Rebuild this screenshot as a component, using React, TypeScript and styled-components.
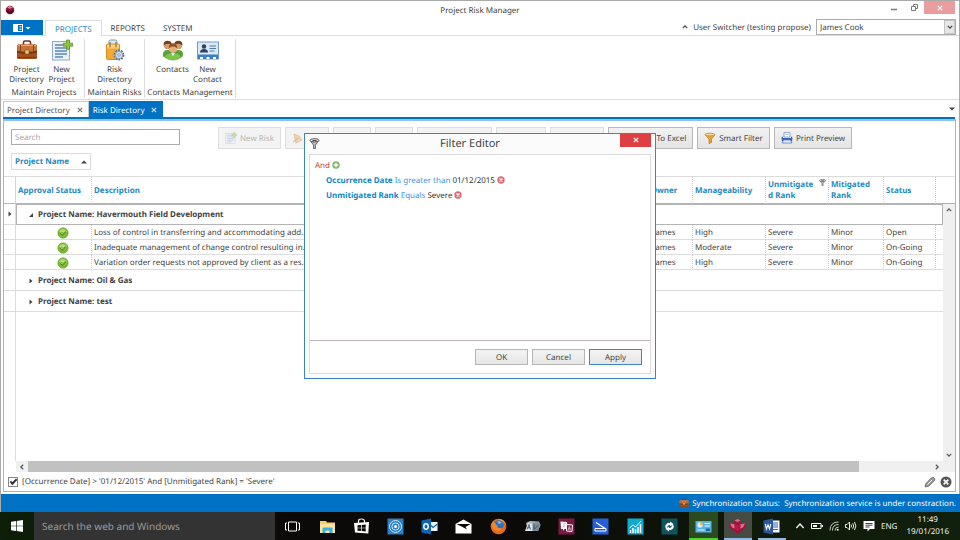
import React from "react";
import styled, { createGlobalStyle, css } from "styled-components";

const blue = "#0072c6";
const headText = "#1f8ac6";
const line = "#dcdcdc";

const GlobalStyle = createGlobalStyle`
  *, *::before, *::after { box-sizing: border-box; }
  body {
    margin: 0;
    background: #fff;
    color: #444;
    font: 8px/11px "Noto Sans", "Open Sans", sans-serif;
    text-rendering: geometricPrecision;
  }
  button, input, select { font: inherit; color: inherit; margin: 0; text-rendering: inherit; }
  button { padding: 0; border: 0; background: none; white-space: nowrap; }
  svg { display: block; flex: none; }
`;

/* ---------- icons ---------- */

type IconProps = { size?: number };

const RoundLogo = () => (
  <svg width="10" height="10" viewBox="0 0 10 10" aria-hidden="true">
    <circle cx="5" cy="5" r="4.300" fill="#8e1338" />
    <path d="M2 2.500 5 1l3 1.500-3 1.200z" fill="#dc8aa2" />
    <path d="M1 5l4 1 4-1-1.500 3L5 9 2.500 8z" fill="#5e0a24" />
  </svg>
);

const BriefcaseIcon = ({ size = 22 }: IconProps) => (
  <svg width={size} height={size} viewBox="0 0 22 22" aria-hidden="true">
    <path d="M7.500 6V3.500q0-1.500 1.500-1.500h4q1.500 0 1.500 1.500V6" fill="none" stroke="#6b3515" strokeWidth="1.600" />
    <rect x="1" y="5.500" width="20" height="14.500" rx="1.500" fill="#a5511f" />
    <rect x="1" y="5.500" width="20" height="7" rx="1.500" fill="#c8733a" />
    <path d="M1 11.500q10 3.500 20 0v2q-10 3-20 0z" fill="#7a3712" />
    <path d="M2 6.500h18" stroke="#e6a878" />
    <path d="M4.500 6v6.500M17.500 6v6.500" stroke="#8a4419" />
    <rect x="9" y="11" width="4" height="4" rx=".8" fill="#e9c878" stroke="#7c4a12" strokeWidth=".6" />
    <path d="M1.500 18.500h19" stroke="#7a3712" />
  </svg>
);

const NewDocIcon = ({ size = 22 }: IconProps) => (
  <svg width={size} height={size} viewBox="0 0 22 22" aria-hidden="true">
    <rect x="1.500" y="2.500" width="17" height="18.500" fill="#e9f1fa" stroke="#8fabcb" />
    <path d="M4 6h8M4 9h12M4 12h12M4 15h12M4 18h8" stroke="#5a86bb" strokeWidth="1.300" />
    <path d="M15.500 1h3v3.200h3.200v3h-3.200v3.200h-3V7.200h-3.200v-3h3.200z" fill="#8cc63c" stroke="#4d8a1a" strokeWidth=".7" />
  </svg>
);

const RiskFolderIcon = () => (
  <svg width="20" height="22" viewBox="0 0 20 22" aria-hidden="true">
    <path d="M4 5V2.500q0-1.500 1.500-1.500h5Q12 1 12 2.500V5" fill="#dfe6ee" stroke="#8296ad" />
    <rect x="1.500" y="5" width="13" height="15.500" rx="1" fill="#f3a92f" stroke="#c47d13" strokeWidth=".8" />
    <path d="M2 5.500h12v4H2z" fill="#fbd07a" />
    <path d="M5 3v5.500M11 3v5.500" stroke="#7a6a4a" />
    <circle cx="14" cy="16" r="4.500" fill="#dfe8f3" stroke="#5d7596" strokeWidth="1.800" strokeDasharray="1.900 .92" />
    <circle cx="14" cy="16" r="3.500" fill="#dfe8f3" stroke="#6f87a8" strokeWidth=".7" />
    <circle cx="14" cy="16" r="1.300" fill="#fff" stroke="#5d7596" strokeWidth=".7" />
  </svg>
);

const ContactsIcon = () => (
  <svg width="22" height="22" viewBox="0 0 24 24" aria-hidden="true">
    <path d="M1 17q0-5 5-5t5 5-10 2zM13 17q0-5 5-5t5 5-10 2z" fill="#5ea13b" />
    <path d="M3 20q0-5 9-5t9 5q-9 6-18 0z" fill="#7cc64a" stroke="#42832a" strokeWidth=".6" />
    <circle cx="6" cy="7" r="4" fill="#d79c6c" />
    <circle cx="18" cy="7" r="4" fill="#d79c6c" />
    <path d="M1.800 7q-.5-5 4.200-5t4.500 4Q5 4 1.800 7zM22.200 7q.5-5-4.200-5t-4.500 4Q19 4 22.200 7z" fill="#70401f" />
    <circle cx="12" cy="10.500" r="4.300" fill="#e6ae80" />
    <path d="M7.500 10q-.3-5.500 4.500-5.500t4.500 5.500Q12 6.500 7.500 10z" fill="#8a5429" />
    <path d="m10 15.500 2 3 2-3z" fill="#fff" />
  </svg>
);

const CardIcon = () => (
  <svg width="22" height="22" viewBox="0 0 22 22" aria-hidden="true">
    <rect x=".5" y="3" width="21" height="17" fill="#dbe9f7" stroke="#6e9ccb" />
    <path d="M1 15.500h20V20H1z" fill="#3e7fc1" />
    <path d="M3 20v-2h3v2M9.500 20v-2h3v2M16 20v-2h3v2" fill="#fff" />
    <circle cx="7" cy="7.500" r="2.200" fill="#2d4360" />
    <path d="M3 13.500q0-3.500 4-3.500t4 3.500z" fill="#2d4360" />
    <path d="M12.500 7h6.500M12.500 9.500h6.500M12.500 12h5" stroke="#537aa8" strokeWidth="1.200" />
  </svg>
);

const MenuGlyph = () => (
  <svg width="18" height="8" viewBox="0 0 18 8" aria-hidden="true">
    <rect x=".5" y=".5" width="9" height="7" fill="none" stroke="#fff" />
    <path d="M1 1h4v6H1z" fill="#fff" />
    <path d="M6.500 2.500h2M6.500 4h2M6.500 5.500h2" stroke="#fff" strokeWidth=".7" />
    <path d="M12.500 3h5L15 5.500z" fill="#fff" />
  </svg>
);

const Cross = ({ size = 6 }: IconProps) => (
  <svg width={size} height={size} viewBox="0 0 6 6" aria-hidden="true">
    <path d="m.8.8 4.400 4.400M5.200.8.8 5.200" stroke="currentColor" strokeWidth="1.200" />
  </svg>
);

const turns = { up: 0, right: 90, down: 180, left: 270 };
const Chevron = ({ to, size = 6 }: IconProps & { to: keyof typeof turns }) => (
  <svg width={size} height={size} viewBox="0 0 6 6" aria-hidden="true">
    <path d="m.8 4.200 2.200-2.400 2.200 2.400" fill="none" stroke="currentColor" strokeWidth={size > 6 ? 0.8 : 1.2} transform={`rotate(${turns[to]} 3 3)`} />
  </svg>
);

const UpTriangle = () => (
  <svg width="6" height="4" viewBox="0 0 6 4" aria-hidden="true"><path d="M0 3.500 3 .5l3 3z" fill="#444" /></svg>
);
const DownTriangle = () => (
  <svg width="6" height="4" viewBox="0 0 6 4" aria-hidden="true"><path d="M0 .5h6l-3 3z" fill="#444" /></svg>
);
const RightTriangle = () => (
  <svg width="4" height="6" viewBox="0 0 4 6" aria-hidden="true"><path d="M.5.500v5L3.500 3z" fill="#444" /></svg>
);
const OpenTriangle = () => (
  <svg width="4" height="6" viewBox="0 0 4 6" aria-hidden="true"><path d="M4 1v4H0z" fill="#444" /></svg>
);

const ApprovedIcon = () => (
  <svg width="12" height="12" viewBox="0 0 12 12" aria-hidden="true">
    <circle cx="6" cy="6" r="5.200" fill="#7dba35" stroke="#6aa52b" strokeWidth=".6" />
    <path d="M1.800 4.500q4-5 8.400 0Q6 6 1.800 4.500z" fill="#b5dc7a" />
    <path d="m3.500 6.200 1.800 1.800 3.200-3.700" fill="none" stroke="#55881f" strokeWidth="1.300" />
    <path d="m3.700 5.500 1.600 1.700 2.700-3.200" fill="none" stroke="#dff0c0" strokeWidth=".6" />
  </svg>
);

const FunnelIcon = () => (
  <svg width="12" height="12" viewBox="0 0 12 12" aria-hidden="true">
    <path d="M1 2.500q5-2.500 10 0L7.500 7v3.500L5 11.500V7z" fill="#f0a233" stroke="#b8700f" strokeWidth=".7" />
    <ellipse cx="6" cy="2.500" rx="4.500" ry="1.300" fill="#fbdc9c" stroke="#b8700f" strokeWidth=".5" />
  </svg>
);

const GreyFunnelIcon = ({ size = 11 }: IconProps) => (
  <svg width={size} height={size} viewBox="0 0 11 11" aria-hidden="true">
    <path d="M1 2.500 4.500 7v3.500h2V7L10 2.500z" fill="#bbb" stroke="#555" strokeWidth=".8" />
    <ellipse cx="5.500" cy="2.300" rx="4.500" ry="1.600" fill="#eee" stroke="#444" strokeWidth=".9" />
    <path d="M3.500 2.500h4" stroke="#444" />
  </svg>
);

const PrinterIcon = () => (
  <svg width="12" height="12" viewBox="0 0 12 12" aria-hidden="true">
    <path d="M3 .5h6V5H3z" fill="#fff" stroke="#6c86b8" strokeWidth=".7" />
    <path d="M.5 6q0-1.500 1.500-1.500V6h8V4.500q1.500 0 1.500 1.500L11 9.500H1z" fill="#3f66b0" />
    <path d="M2.500 8h7l1.500 3H1z" fill="#e3ecf8" stroke="#4f72b3" strokeWidth=".7" />
    <path d="M4 2.500h4" stroke="#9ab" strokeWidth=".7" />
  </svg>
);

const EditIcon = () => (
  <svg width="12" height="12" viewBox="0 0 12 12" aria-hidden="true">
    <path d="m2 2 5 2 3 4-6 3z" fill="#f3a23c" stroke="#b66c10" strokeWidth=".7" />
    <path d="m1 10 5-4" stroke="#8b5a1a" />
  </svg>
);

const ExcelIcon = () => (
  <svg width="12" height="12" viewBox="0 0 12 12" aria-hidden="true">
    <rect x="1" y="1" width="10" height="10" fill="#2b8a4b" />
    <path d="m4 3.500 4 5m0-5-4 5" stroke="#fff" strokeWidth="1.200" />
  </svg>
);

const AddIcon = () => (
  <svg width="8" height="8" viewBox="0 0 8 8" aria-hidden="true">
    <circle cx="4" cy="4" r="3.700" fill="#7db76b" />
    <path d="M4 1.800v4.400M1.800 4h4.400" stroke="#fff" strokeWidth="1.300" />
  </svg>
);
const RemoveIcon = () => (
  <svg width="8" height="8" viewBox="0 0 8 8" aria-hidden="true">
    <circle cx="4" cy="4" r="3.700" fill="#de6c74" />
    <path d="m2.500 2.500 3 3m0-3-3 3" stroke="#fff" strokeWidth="1.300" />
  </svg>
);

const PencilIcon = () => (
  <svg width="12" height="12" viewBox="0 0 12 12" aria-hidden="true">
    <path d="m1 11 .8-3.500 6-6q1-.8 2.300.5t.5 2.300l-6 6z" fill="#999" stroke="#666" strokeWidth=".8" />
    <path d="m3.500 8.500 4.500-4.500" stroke="#fff" strokeWidth=".9" />
  </svg>
);
const ClearIcon = () => (
  <svg width="12" height="12" viewBox="0 0 12 12" aria-hidden="true">
    <circle cx="6" cy="6" r="5.500" fill="#555" />
    <path d="m3.700 3.700 4.600 4.600m0-4.600L3.700 8.300" stroke="#fff" strokeWidth="1.700" />
  </svg>
);

const RestoreIcon = () => (
  <svg width="7" height="7" viewBox="0 0 7 7" aria-hidden="true">
    <path d="M2.500 2V.5h4v4H5" fill="none" stroke="#777" />
    <path d="M.5 2.500h4v4h-4z" fill="#fff" stroke="#777" />
  </svg>
);

/* ---------- window frame ---------- */

const Page = styled.div`
  display: flex;
  flex-direction: column;
  min-height: 100vh;
`;

const AppWindow = styled.main`
  position: relative;
  flex: 1;
  display: flex;
  flex-direction: column;
  border: 1px solid #a9a9a9;
  border-bottom: 0;
`;

const TitleBar = styled.header`
  display: grid;
  grid-template-columns: 1fr auto 1fr;
  height: 18px;
  padding: 0 4px;
  align-items: center;
`;

const AppTitle = styled.h1`
  margin: 0;
  font-size: 8px;
  font-weight: 400;
`;

const WindowButtons = styled.div`
  display: flex;
  justify-content: flex-end;
  align-self: start;
`;

const WindowButton = styled.button<{ $close?: boolean }>`
  display: grid;
  place-items: center;
  width: ${(p) => (p.$close ? 31 : 20)}px;
  height: 13px;
  color: ${(p) => (p.$close ? "#fff" : "#777")};
  background: ${(p) => (p.$close ? "#eb9c9e" : "none")};
`;

/* ---------- ribbon ---------- */

const RibbonTabs = styled.nav`
  display: flex;
  height: 17px;
  padding-top: 1px;
  border-bottom: 1px solid ${line};
`;

const AppMenuButton = styled.button`
  display: grid;
  place-items: center;
  width: 42px;
  height: 15px;
  margin-right: 2px;
  background: ${blue};
`;

const RibbonTab = styled.button<{ $active?: boolean }>`
  height: 16px;
  padding: 1px 9px 0;
  ${(p) =>
    p.$active &&
    css`
      color: ${headText};
      background: #fff;
      border: 1px solid ${line};
      border-bottom: 0;
    `}
`;

const UserSwitcher = styled.div`
  display: flex;
  align-items: center;
  gap: 5px;
  height: 16px;
  margin: -1px 3px 0 auto;
`;

const SelectBox = styled.div`
  position: relative;
  width: 140px;
  height: 16px;
`;

const Select = styled.select`
  appearance: none;
  width: 100%;
  height: 100%;
  padding: 0 14px 0 3px;
  border: 1px solid #ababab;
  border-radius: 0;
  background: #fff;
`;

const SelectArrow = styled.span`
  position: absolute;
  inset: 1px 1px 1px auto;
  display: grid;
  place-items: center;
  width: 11px;
  background: #e6e6e6;
  border: 1px solid #c4c4c4;
  pointer-events: none;
`;

const Ribbon = styled.section`
  display: flex;
  height: 64px;
  padding: 3px 0 1px 3px;
  border-bottom: 1px solid ${line};
  line-height: 10px;
`;

const RibbonGroup = styled.div<{ $width: number }>`
  display: flex;
  flex-direction: column;
  justify-content: space-between;
  min-width: ${(p) => p.$width}px;
  border-right: 1px solid ${line};
  text-align: center;
`;

const RibbonItems = styled.div`
  display: flex;
  justify-content: center;
`;

const RibbonButton = styled.button`
  display: flex;
  flex-direction: column;
  align-items: center;
  gap: 4px;
  min-width: 35px;
  white-space: pre-line;
`;

/* ---------- document tabs ---------- */

const DocTabs = styled.nav`
  display: flex;
  align-items: flex-end;
  height: 19px;
  margin: 0 4px 0 2px;
  border-bottom: 2px solid ${blue};
`;

const DocTab = styled.div<{ $active?: boolean }>`
  display: flex;
  align-items: center;
  gap: 7px;
  height: 16px;
  padding: 1px 5px 0 3px;
  border: 1px solid ${(p) => (p.$active ? blue : "#c8c8c8")};
  border-bottom: 0;
  color: ${(p) => (p.$active ? "#fff" : "#555")};
  background: ${(p) => (p.$active ? blue : "#fff")};
`;

const TabClose = styled.button`
  opacity: 0.8;
`;

const TabListButton = styled.button`
  align-self: center;
  margin-left: auto;
`;

/* ---------- work area ---------- */

const WorkArea = styled.section`
  flex: 1;
  display: flex;
  flex-direction: column;
  margin: 0 3px 2px 2px;
  border: 1px solid #a3b6c6;
  border-top: 2px solid #8fc3e8;
`;

const Toolbar = styled.div`
  display: flex;
  gap: 4px;
  padding: 6px 7px 0;
`;

const SearchInput = styled.input`
  width: 169px;
  height: 16px;
  margin: 2px 34px 0 0;
  padding: 1px 3px 0;
  border: 1px solid #ababab;
  &::placeholder { color: #a8a8a8; }
`;

const ToolButton = styled.button<{ $width: number }>`
  display: flex;
  align-items: center;
  justify-content: center;
  gap: 3px;
  width: ${(p) => p.$width}px;
  height: 22px;
  overflow: hidden;
  border: 1px solid #b8b8b8;
  background: linear-gradient(#f2f2f2, #e4e4e4);
  &:disabled { color: #b4b4b4; background: #f3f3f3; border-color: #dedede; }
  &:disabled svg { opacity: 0.4; }
`;

const GroupBar = styled.div`
  padding: 4px 7px 6px;
`;

const GroupChip = styled.button`
  display: flex;
  align-items: center;
  justify-content: space-between;
  width: 80px;
  height: 17px;
  padding: 0 3px;
  border: 1px solid ${line};
  color: ${headText};
  font-weight: 700;
`;

const GridArea = styled.div`
  flex: 1;
  display: flex;
  min-height: 240px;
  border-top: 1px solid ${line};
`;

const GridBody = styled.div`
  flex: 1;
  min-width: 0;
  background: linear-gradient(${line}, ${line}) 11px 0 / 1px 100% no-repeat;
`;

const Table = styled.table`
  width: 100%;
  table-layout: fixed;
  border-collapse: separate;
  border-spacing: 0;
`;

const HeadCell = styled.th`
  height: 27px;
  padding: 0 2px;
  border-right: 1px dotted #ccc;
  border-bottom: 1px solid #b4b4b4;
  color: ${headText};
  font-weight: 700;
  text-align: left;
  &:last-child { border-right: 0; }
`;

const HeadFlex = styled.span`
  display: flex;
  justify-content: space-between;
  align-items: flex-start;
`;

const Cell = styled.td`
  height: 15px;
  padding: 1px 2px 0;
  overflow: hidden;
  border-right: 1px dotted #ccc;
  border-bottom: 1px solid ${line};
  white-space: nowrap;
  text-overflow: ellipsis;
  &:last-child { border-right: 0; }
  svg { margin-left: 39px; }
`;

const IndicatorCell = styled.td`
  padding: 0 4px;
  border-right: 1px solid ${line};
  border-bottom: 1px solid ${line};
`;

const GroupCell = styled.td<{ $focused?: boolean }>`
  height: 21px;
  padding: 1px 13px 0;
  border-bottom: 1px solid ${line};
  ${(p) => p.$focused && css`outline: 1px solid #b4b4b4; outline-offset: -1px;`}
`;

const GroupToggle = styled.button`
  display: flex;
  align-items: center;
  gap: 5px;
  font-weight: 700;
`;

const VScroll = styled.div`
  display: flex;
  flex-direction: column;
  width: 12px;
`;

const VScrollHead = styled.div`
  height: 27px;
  border-bottom: 1px solid #b4b4b4;
`;

const VTrack = styled.div`
  flex: 1;
  display: flex;
  flex-direction: column;
  justify-content: space-between;
  align-items: center;
  padding: 3px 0;
  background: #f0f0f0;
`;

const HScroll = styled.div`
  display: flex;
  height: 11px;
  margin-left: 12px;
  padding-right: 12px;
  background: #f0f0f0;
`;

const ScrollButton = styled.button`
  display: grid;
  place-items: center;
  width: 12px;
  color: #555;
`;

const HTrack = styled.div`
  flex: 1;
`;

const HThumb = styled.div`
  width: 92%;
  height: 100%;
  background: #c1c1c1;
`;

const FilterPanel = styled.div`
  display: flex;
  align-items: center;
  gap: 4px;
  height: 19px;
  padding: 0 3px 0 4px;
`;

const FilterLabel = styled.label`
  flex: 1;
  display: flex;
  align-items: center;
  gap: 4px;
`;

const Checkbox = styled.input`
  appearance: none;
  display: grid;
  place-items: center;
  width: 10px;
  height: 10px;
  border: 1px solid #888;
  &:checked::after {
    content: "";
    width: 7px;
    height: 4px;
    border: solid #333;
    border-width: 0 0 2px 2px;
    transform: translateY(-1px) rotate(-45deg);
  }
`;

const StatusBar = styled.footer`
  display: flex;
  align-items: center;
  justify-content: flex-end;
  gap: 3px;
  height: 18px;
  margin-right: -1px;
  padding-right: 4px;
  color: #fff;
  background: ${blue};
  white-space: pre;
`;

/* ---------- filter dialog ---------- */

const DialogLayer = styled.div`
  position: absolute;
  inset: 0 0 2px;
  display: grid;
  place-items: center;
`;

const Dialog = styled.div`
  display: flex;
  flex-direction: column;
  width: 352px;
  height: 246px;
  padding: 0 4px 4px;
  border: 1px solid #3a87c0;
  background: #fbfbfb;
`;

const DialogHead = styled.div`
  display: grid;
  grid-template-columns: auto 1fr auto;
  align-items: center;
  height: 20px;
`;

const DialogTitle = styled.h2`
  margin: 0;
  font-size: 11px;
  line-height: 16px;
  font-weight: 400;
  text-align: center;
`;

const DialogClose = styled.button`
  display: grid;
  place-items: center;
  align-self: start;
  width: 31px;
  height: 13px;
  color: #fff;
  background: #df3f42;
`;

const DialogBody = styled.div`
  flex: 1;
  display: flex;
  flex-direction: column;
  border: 1px solid ${line};
  background: #fff;
`;

const Conditions = styled.div`
  flex: 1;
  padding: 3px 5px;
`;

const Condition = styled.div<{ $nested?: boolean }>`
  display: flex;
  align-items: center;
  gap: 2px;
  height: 15px;
  padding-left: ${(p) => (p.$nested ? 11 : 0)}px;
`;

const Term = styled.button<{ $kind: "join" | "field" | "operator" | "value" }>`
  color: ${(p) => ({ join: "#d0402b", field: "#0f86c9", operator: "#3f95e6", value: "#333" })[p.$kind]};
  font-weight: ${(p) => (p.$kind === "field" ? 700 : 400)};
`;

const DialogActions = styled.div`
  display: flex;
  justify-content: flex-end;
  gap: 4px;
  padding: 8px;
  border-top: 1px solid #c0b8b8;
`;

const DialogButton = styled.button<{ $primary?: boolean }>`
  width: 53px;
  height: 16px;
  padding-top: 1px;
  border: 1px solid ${(p) => (p.$primary ? "#3b87c4" : "#b5b5b5")};
  background: linear-gradient(#f3f3f3, #e6e6e6);
`;

/* ---------- taskbar ---------- */

const Taskbar = styled.footer`
  display: flex;
  height: 28px;
  color: #f2f2f2;
  background: linear-gradient(90deg, #0d1f08, #0b0a08 30%, #0b0a08 55%, #0f1a0a 80%, #10200b);
`;

const TaskButton = styled.button<{ $width?: number; $lit?: string; $bar?: string }>`
  display: grid;
  place-items: center;
  width: ${(p) => (p.$width ? `${p.$width}px` : "auto")};
  margin: 0 ${(p) => (p.$bar ? 3 : 0)}px;
  background: ${(p) => p.$lit ?? "none"};
  box-shadow: ${(p) => (p.$bar ? `inset 0 -2px ${p.$bar}` : "none")};
`;

const TaskSearch = styled.input`
  width: 241px;
  padding: 0 8px;
  border: 0;
  background: #333;
  font-size: 10px;
  &::placeholder { color: #9b9b9b; opacity: 1; }
`;

const TaskApps = styled.div`
  flex: 1;
  display: grid;
  grid-auto-flow: column;
  grid-auto-columns: 1fr;
`;

const Tray = styled.div`
  display: flex;
  align-items: center;
  gap: 6px;
  width: 171px;
  padding: 0 11px 0 6px;
`;

const Clock = styled.time`
  margin-left: auto;
  text-align: center;
  line-height: 12px;
  white-space: pre-line;
`;

const appIcons: { name: string; lit?: string; bar?: string; art: React.ReactNode }[] = [
  { name: "File Explorer", art: <><path d="M1 3h6l1 1.500h8V15H1z" fill="#f4d06a" /><path d="M1 6h15v9H1z" fill="#fbe49a" /><path d="M3.500 15V10.500q0-1 1-1h8q1 0 1 1V15h-3v-2.500h-4V15z" fill="#36b3e6" /></> },
  { name: "Store", art: <><path d="M5.500 5V3q0-2 3-2t3 2v2" fill="none" stroke="#fff" strokeWidth="1.200" /><path d="m1 5 15-1-.7 11.500L2 14.500z" fill="#fff" /><path d="M4.500 7.300 8 7v2.700H4.500zM8.700 6.900l4-.3v3.100h-4zM4.500 10.300H8V13l-3.500-.3zM8.700 10.300h4v3.200l-4-.4z" fill="#0b0a08" /></> },
  { name: "Connect", art: <><rect x=".5" y=".5" width="16" height="16" fill="#2b7fc4" /><circle cx="8.500" cy="8.500" r="6" fill="none" stroke="#cfe5f6" /><circle cx="8.500" cy="8.500" r="3.600" fill="none" stroke="#cfe5f6" /><circle cx="8.500" cy="8.500" r="1.500" fill="#fff" /></> },
  { name: "Outlook", art: <><path d="M8 4h8.500v9H8z" fill="#f2f7fb" /><path d="m9.500 7 2.500 2.500L16.500 6" fill="none" stroke="#0a66b5" strokeWidth="1.200" /><path d="m.5 2.500 9.500-2v16l-9.500-2z" fill="#0a66b5" /><ellipse cx="5" cy="8.500" rx="2.200" ry="2.700" fill="none" stroke="#fff" strokeWidth="1.400" /></> },
  { name: "Mail", art: <><path d="M.5 6 8.500 1.500l8 4.500v9.500H.5z" fill="#fff" /><path d="m1.500 6 14 0-5 3 1.500 2.500L7.500 9z" fill="#0b0a08" /></> },
  { name: "Firefox", art: <><circle cx="8.500" cy="8.500" r="7.800" fill="#e66a1b" /><path d="M8 1q7 0 8 6-2-4-5-4z" fill="#f9b233" /><circle cx="8.800" cy="7" r="4.800" fill="#2f6fc0" /><path d="M2 4q-1 8 5 9 4 0 5.500-3Q9 11 7 9l1-1.500Q5 7 5.500 5 3.500 5 2 4z" fill="#f08a24" /><path d="M7 3.500q3-1.500 5 1.500l-3 1z" fill="#7eb6e8" /></> },
  { name: "Cubes", art: <><path d="m2 5 4-2 9 .5 1.500 3.500-2.500 6H4z" fill="#a8b3bb" /><path d="m4 5 4 1v7H1z" fill="#e2eaee" /><path d="m9 5 5-1 2.500 3-2.500 6H9z" fill="#7d8b95" /><path d="m3 11.500 2-5 1.500 5M4 9.800h2M10 6.500v5l4.500-4.500" fill="none" stroke="#33566f" strokeWidth=".9" /></> },
  { name: "Translator", art: <><rect x=".5" y=".5" width="16" height="16" fill="#7d1746" /><path d="M2.500 3.500 9 4l.5 7-3 0-1.500 2v-2H3z" fill="#fff" /><path d="m8.500 6.500 6 .5-.5 6.500-5.500-.5z" fill="#7d1746" stroke="#fff" /><path d="M4.500 5.500h3M6 5.500v4M4.500 9 7.500 7.500M10 12l1.300-3.500 1.400 3.800M10.300 11h2" stroke="#e8b0cb" fill="none" strokeWidth=".9" /></> },
  { name: "Scanner", art: <><rect x=".5" y=".5" width="16" height="16" fill="#2560d8" /><path d="m4 4.500 9 6" stroke="#fff" strokeWidth="1.300" /><path d="M3 10.500h11V13H3z" fill="none" stroke="#fff" /></> },
  { name: "Task Monitor", art: <><rect x=".5" y=".5" width="16" height="16" fill="#12abd0" /><path d="M3.500 15v-3M6 15v-5M8.500 15v-4M11 15V9M13.500 15V6" stroke="#fff" strokeWidth="1.500" /><path d="m2.500 10 3.500-3 2.500 2 5.500-6" fill="none" stroke="#fff" /></> },
  { name: "Sync", art: <><rect x=".5" y=".5" width="16" height="16" fill="#0e5560" /><path d="M5.500 11.500Q3 8 5.500 6t3.500-.5V3.500L12.500 6 9 8.500V7Q6 7 5.500 11.500zM11.500 5.500Q14 9 11.500 11t-3.500.5v2L4.500 11 8 8.500V10q3 0 3.500-4.500z" fill="#fff" /></> },
  { name: "Control Panel", lit: "#2c4a20", bar: "#4fd42a", art: <><rect x=".5" y="3" width="16" height="11.500" fill="#58b4e8" /><circle cx="5" cy="7" r="2.700" fill="#d4f0ff" /><path d="M5 7V4.300A2.700 2.700 0 0 1 7.700 7z" fill="#f2b632" /><path d="M9.500 5.500H15M9.500 8H15M2.500 12h7" stroke="#e8f7ff" /><path d="M11 10.500h4V13h-4z" fill="#1a68ac" /></> },
  { name: "Project Risk Manager", lit: "#464b44", bar: "#8fb9e0", art: <><path d="M5.500 2.500 8.500 1l3 1.500v2l4.500 1 .5 3.500-3.500 3.500-4.500 4-4.500-4L.5 9 1 5.500l4.500-1z" fill="#a31238" /><path d="m5.500 2.500 3-1.500 3 1.500-3 1.500zM1 5.500l3.500.5L8.500 8l4-2 3.500-.5-2 4-5.500 2-5.500-2z" fill="#d9708d" /><path d="M5 7h7l-1 4H6z" fill="#b51a44" /></> },
  { name: "Word", bar: "#8fb9e0", art: <><path d="M8 2.500h8.500v12H8z" fill="#f3f7fc" /><path d="M10 5h5M10 7h5M10 9h5M10 11.500h5" stroke="#2b579a" strokeWidth=".9" /><path d="m.5 2.500 9.500-2v16l-9.500-2z" fill="#2b579a" /><path d="m2.300 6 1.200 5L5 6.800 6.500 11l1.300-5" fill="none" stroke="#fff" strokeWidth="1.100" /></> },
];

const disabledTools = [
  { label: "New Risk", width: 63, icon: <NewDocIcon size={12} />, text: true },
  { label: "Edit", width: 44, icon: <EditIcon />, text: true },
  { label: "Copy", width: 38 },
  { label: "Delete", width: 38 },
  { label: "Submit Approval", width: 75 },
  { label: "Approve", width: 50 },
  { label: "Refresh", width: 54 },
];

const risks = [
  ["Loss of control in transferring and accommodating add...", "High", "Open"],
  ["Inadequate management of change control resulting in...", "Moderate", "On-Going"],
  ["Variation order requests not approved by client as a res...", "High", "On-Going"],
];

const columnWidths = [12, 76, 224, 314, 63, 73, 63, 55, 52, 0];

export default function App() {
  return (
    <Page>
      <GlobalStyle />
      <AppWindow>
        <TitleBar>
          <RoundLogo />
          <AppTitle>Project Risk Manager</AppTitle>
          <WindowButtons>
            <WindowButton aria-label="Minimize">
              <svg width="7" height="7" viewBox="0 0 7 7"><path d="M0 5.500h6" stroke="#777" strokeWidth="1.500" /></svg>
            </WindowButton>
            <WindowButton aria-label="Restore"><RestoreIcon /></WindowButton>
            <WindowButton $close aria-label="Close"><Cross /></WindowButton>
          </WindowButtons>
        </TitleBar>

        <RibbonTabs>
          <AppMenuButton aria-label="Application menu"><MenuGlyph /></AppMenuButton>
          <RibbonTab $active>PROJECTS</RibbonTab>
          <RibbonTab>REPORTS</RibbonTab>
          <RibbonTab>SYSTEM</RibbonTab>
          <UserSwitcher>
            <Chevron to="up" />
            <label htmlFor="user">User Switcher (testing propose)</label>
            <SelectBox>
              <Select id="user" defaultValue="James Cook"><option>James Cook</option></Select>
              <SelectArrow><Chevron to="down" /></SelectArrow>
            </SelectBox>
          </UserSwitcher>
        </RibbonTabs>

        <Ribbon>
          <RibbonGroup $width={81}>
            <RibbonItems>
              <RibbonButton><BriefcaseIcon />{"Project\nDirectory"}</RibbonButton>
              <RibbonButton><NewDocIcon />{"New\nProject"}</RibbonButton>
            </RibbonItems>
            Maintain Projects
          </RibbonGroup>
          <RibbonGroup $width={60}>
            <RibbonItems><RibbonButton><RiskFolderIcon />{"Risk\nDirectory"}</RibbonButton></RibbonItems>
            Maintain Risks
          </RibbonGroup>
          <RibbonGroup $width={91}>
            <RibbonItems>
              <RibbonButton><ContactsIcon />Contacts</RibbonButton>
              <RibbonButton><CardIcon />{"New\nContact"}</RibbonButton>
            </RibbonItems>
            Contacts Management
          </RibbonGroup>
        </Ribbon>

        <DocTabs>
          <DocTab>Project Directory<TabClose aria-label="Close Project Directory"><Cross /></TabClose></DocTab>
          <DocTab $active>Risk Directory<TabClose aria-label="Close Risk Directory"><Cross /></TabClose></DocTab>
          <TabListButton aria-label="Tab list"><DownTriangle /></TabListButton>
        </DocTabs>

        <WorkArea>
          <Toolbar>
            <SearchInput placeholder="Search" aria-label="Search" />
            {disabledTools.map((t) => (
              <ToolButton key={t.label} $width={t.width} disabled aria-label={t.label}>
                {t.icon}
                {t.text && t.label}
              </ToolButton>
            ))}
            <ToolButton $width={85}><ExcelIcon />Export To Excel</ToolButton>
            <ToolButton $width={73}><FunnelIcon />Smart Filter</ToolButton>
            <ToolButton $width={78}><PrinterIcon />Print Preview</ToolButton>
          </Toolbar>
          <GroupBar><GroupChip>Project Name<UpTriangle /></GroupChip></GroupBar>

          <GridArea>
            <GridBody>
              <Table>
                <colgroup>
                  {columnWidths.map((w, i) => <col key={i} style={w ? { width: w } : undefined} />)}
                </colgroup>
                <thead>
                  <tr>
                    <HeadCell />
                    <HeadCell>Approval Status</HeadCell>
                    <HeadCell>Description</HeadCell>
                    <HeadCell />
                    <HeadCell>Risk Owner</HeadCell>
                    <HeadCell>Manageability</HeadCell>
                    <HeadCell><HeadFlex><span>Unmitigate<br />d Rank</span><GreyFunnelIcon size={7} /></HeadFlex></HeadCell>
                    <HeadCell>Mitigated Rank</HeadCell>
                    <HeadCell>Status</HeadCell>
                    <HeadCell />
                  </tr>
                </thead>
                <tbody>
                  <tr>
                    <IndicatorCell><RightTriangle /></IndicatorCell>
                    <GroupCell $focused colSpan={9}><GroupToggle><OpenTriangle />Project Name: Havermouth Field Development</GroupToggle></GroupCell>
                  </tr>
                  {risks.map(([text, manage, status]) => (
                    <tr key={text}>
                      <IndicatorCell />
                      <Cell><ApprovedIcon /></Cell>
                      <Cell>{text}</Cell>
                      <Cell />
                      <Cell>Cook James</Cell>
                      <Cell>{manage}</Cell>
                      <Cell>Severe</Cell>
                      <Cell>Minor</Cell>
                      <Cell>{status}</Cell>
                      <Cell />
                    </tr>
                  ))}
                  {["Oil & Gas", "test"].map((name) => (
                    <tr key={name}>
                      <IndicatorCell />
                      <GroupCell colSpan={9}><GroupToggle><RightTriangle />Project Name: {name}</GroupToggle></GroupCell>
                    </tr>
                  ))}
                </tbody>
              </Table>
            </GridBody>
            <VScroll>
              <VScrollHead />
              <VTrack>
                <ScrollButton aria-label="Scroll up"><Chevron to="up" /></ScrollButton>
                <ScrollButton aria-label="Scroll down"><Chevron to="down" /></ScrollButton>
              </VTrack>
            </VScroll>
          </GridArea>
          <HScroll>
            <ScrollButton aria-label="Scroll left"><Chevron to="left" /></ScrollButton>
            <HTrack><HThumb /></HTrack>
            <ScrollButton aria-label="Scroll right"><Chevron to="right" /></ScrollButton>
          </HScroll>
          <FilterPanel>
            <FilterLabel>
              <Checkbox type="checkbox" defaultChecked />
              [Occurrence Date] &gt; '01/12/2015' And [Unmitigated Rank] = 'Severe'
            </FilterLabel>
            <button aria-label="Edit filter"><PencilIcon /></button>
            <button aria-label="Clear filter"><ClearIcon /></button>
          </FilterPanel>
        </WorkArea>

        <StatusBar>
          <BriefcaseIcon size={10} />
          <span>{"Synchronization Status:  Synchronization service is under constraction."}</span>
        </StatusBar>

        <DialogLayer>
          <Dialog role="dialog" aria-labelledby="filter-title">
            <DialogHead>
              <GreyFunnelIcon />
              <DialogTitle id="filter-title">Filter Editor</DialogTitle>
              <DialogClose aria-label="Close dialog"><Cross /></DialogClose>
            </DialogHead>
            <DialogBody>
              <Conditions>
                <Condition>
                  <Term $kind="join">And</Term>
                  <button aria-label="Add condition"><AddIcon /></button>
                </Condition>
                <Condition $nested>
                  <Term $kind="field">Occurrence Date</Term>
                  <Term $kind="operator">Is greater than</Term>
                  <Term $kind="value">01/12/2015</Term>
                  <button aria-label="Remove date condition"><RemoveIcon /></button>
                </Condition>
                <Condition $nested>
                  <Term $kind="field">Unmitigated Rank</Term>
                  <Term $kind="operator">Equals</Term>
                  <Term $kind="value">Severe</Term>
                  <button aria-label="Remove rank condition"><RemoveIcon /></button>
                </Condition>
              </Conditions>
              <DialogActions>
                <DialogButton>OK</DialogButton>
                <DialogButton>Cancel</DialogButton>
                <DialogButton $primary>Apply</DialogButton>
              </DialogActions>
            </DialogBody>
          </Dialog>
        </DialogLayer>
      </AppWindow>

      <Taskbar>
        <TaskButton $width={34} aria-label="Start">
          <svg width="12" height="12" viewBox="0 0 12 12"><path d="M0 1.700 5 1v4.700H0zM5.700.9 12 0v5.700H5.700zM0 6.300h5V11l-5-.7zM5.700 6.300H12V12l-6.300-.9z" fill="#fff" /></svg>
        </TaskButton>
        <TaskSearch placeholder="Search the web and Windows" aria-label="Search the web and Windows" />
        <TaskButton $width={35} aria-label="Task view">
          <svg width="15" height="11" viewBox="0 0 15 11"><path d="M3.500 1h8v9h-8zM2 2H.5v7H2M13 2h1.500v7H13" fill="none" stroke="#fff" /></svg>
        </TaskButton>
        <TaskApps>
          {appIcons.map((a) => (
            <TaskButton key={a.name} $lit={a.lit} $bar={a.bar} aria-label={a.name}>
              <svg width="17" height="17" viewBox="0 0 17 17">{a.art}</svg>
            </TaskButton>
          ))}
        </TaskApps>
        <Tray>
          <Chevron to="up" size={10} />
          <svg width="12" height="8" viewBox="0 0 12 8"><path d="M.5 1.500h9.500v5H.5z" fill="none" stroke="#fff" /><path d="M2 3h4v2H2zM10.500 3H12v2h-1.500z" fill="#fff" /></svg>
          <svg width="10" height="10" viewBox="0 0 10 10"><path d="M1 9.500Q1 1 9.500 1M3.500 9.500q0-6 6-6M6 9.500Q6 6 9.500 6" fill="none" stroke="#ddd" strokeWidth=".9" /><circle cx="8.700" cy="8.700" r="1" fill="#fff" /></svg>
          <svg width="12" height="10" viewBox="0 0 12 10"><path d="M.5 3.500H2L4.500 1v8L2 6.500H.5zM6 3.500q1 1.500 0 3M7.700 2.200q2 2.800 0 5.600M9.500 1q2.800 4 0 8" fill="none" stroke="#fff" strokeWidth=".9" /></svg>
          <svg width="12" height="12" viewBox="0 0 12 12"><path d="M.5 1h11v8H7l-2.500 2.500V9h-4z" fill="#fff" /><path d="M2.500 3.500h7M2.500 5.200h7M2.500 7h4" stroke="#111" strokeWidth=".8" /></svg>
          ENG
          <Clock>{"11:49\n19/01/2016"}</Clock>
        </Tray>
      </Taskbar>
    </Page>
  );
}
